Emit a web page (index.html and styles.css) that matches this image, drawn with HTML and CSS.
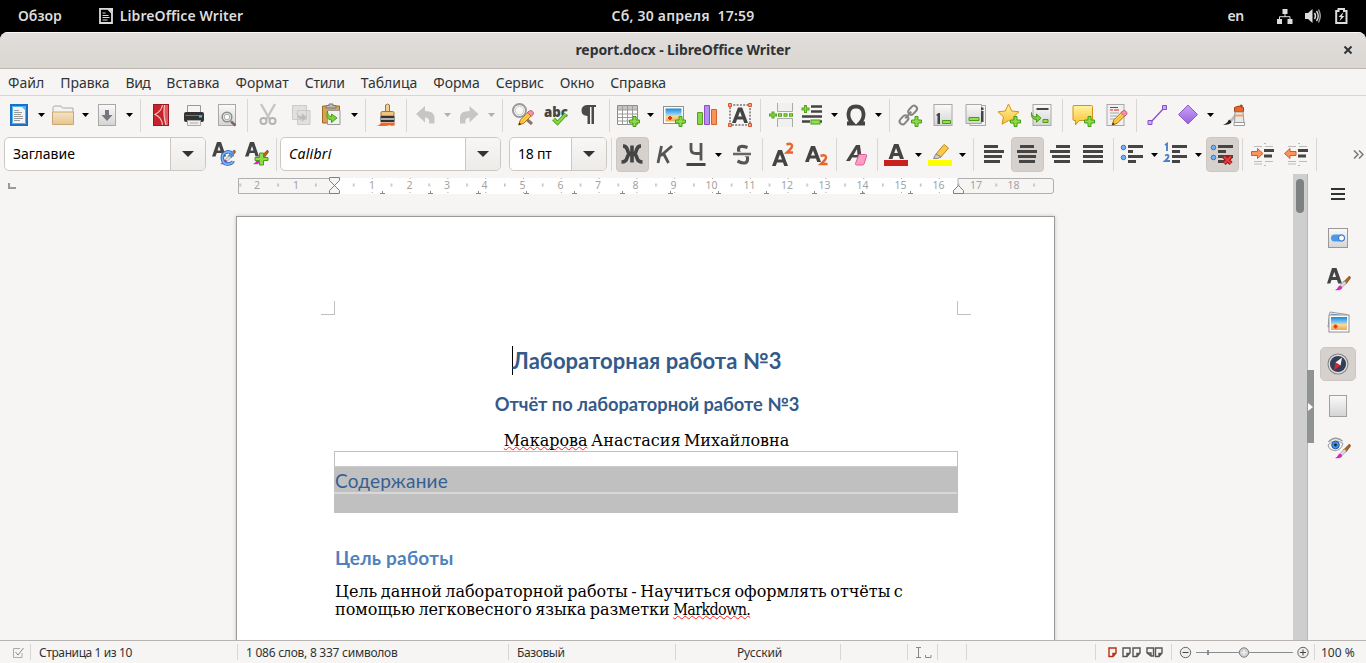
FILE: index.html
```html
<!DOCTYPE html>
<html lang="ru">
<head>
<meta charset="utf-8">
<title>report.docx - LibreOffice Writer</title>
<link rel="stylesheet" href="styles.css">
</head>
<body>
<svg class="defs" width="0" height="0">
<defs>
<linearGradient id="gGrey" x1="0" y1="0" x2="0" y2="1"><stop offset="0" stop-color="#fafafa"/><stop offset="1" stop-color="#d4d4d4"/></linearGradient>
<linearGradient id="gSky" x1="0" y1="0" x2="0" y2="1"><stop offset="0" stop-color="#1888d8"/><stop offset=".55" stop-color="#a8e0fa"/><stop offset=".56" stop-color="#fbdc98"/><stop offset="1" stop-color="#f0a850"/></linearGradient>
<linearGradient id="gFold" x1="0" y1="0" x2="0" y2="1"><stop offset="0" stop-color="#f7e3c4"/><stop offset="1" stop-color="#e6c58f"/></linearGradient>
<linearGradient id="gYel" x1="0" y1="0" x2="0" y2="1"><stop offset="0" stop-color="#fff3a0"/><stop offset="1" stop-color="#fbc02d"/></linearGradient>
<linearGradient id="gPur" x1="0" y1="0" x2="0" y2="1"><stop offset="0" stop-color="#c9a2f5"/><stop offset="1" stop-color="#9a62dc"/></linearGradient>
<g id="plus"><path d="M4 .5h3v3.500h3.500v3H7v3.500H4V7H.5V4H4z" fill="#8bdc45" stroke="#4a9c16"/></g>
<g id="pencil"><path d="M1 13l1.500-4.500L10 1l3 3-7.500 7.500z" fill="#f8c030" stroke="#a86a10" stroke-width=".8"/><path d="M9 2l1.800-1.800q1.500-.6 2.700.6t.6 2.700L12.300 5.200z" fill="#f890a8" stroke="#b84060" stroke-width=".7"/><path d="M1 13l.7-2.200L3.300 12.300z" fill="#222"/><path d="M3.500 8.800l6-6M5 10.400l6-6" stroke="#ffe27a" stroke-width=".7"/></g>
<g id="brush"><path d="M7.500 6l6-6 1 2-4.500 6z" fill="#b86414" stroke="#5c3208" stroke-width=".6"/><path d="M4 9.500L8.500 5l2 2L6 11.500z" fill="#ddd" stroke="#777" stroke-width=".6"/><path d="M-1 14q2.500-1 3.500-3.500 1.500-1.500 3 0t0 2.500q-2 2-6.500 1z" fill="#d428c0"/></g>
<g id="photo"><rect x=".5" y=".5" width="20" height="17" fill="#fff" stroke="#909090"/><rect x="2.500" y="2.500" width="16" height="13" fill="url(#gSky)"/><path d="M7 10v4M5 12h4" stroke="#e03a10" stroke-width="2"/></g>
<g id="caret"><path d="M4 10h7l-3.500 4z"/></g>
</defs>
</svg>

<header class="topbar">
  <div class="top-left"><span>Обзор</span>
    <span class="top-app"><svg width="14" height="16" viewBox="0 0 14 16"><path d="M1 .9h8L13 5v10H1z" fill="none" stroke="#ddd" stroke-width="1.800"/><path d="M9 0h5v5z" fill="#ddd"/><path d="M3.500 5h3M3.500 7.500h6M3.500 9.500h7M3.500 12h5" stroke="#ddd" stroke-width="1.200"/></svg><span class="w-app">LibreOffice Writer</span></span></div>
  <div class="top-date"><span class="w-date">Сб, 30 апреля&nbsp; 17:59</span></div>
  <div class="top-right"><span class="w-en">en</span>
    <svg class="i-net" width="16" height="16" viewBox="0 0 16 16"><path d="M5.500 1h5v5h-5zM0 11h5v5H0zM10.500 11h5v5h-5z" fill="#ddd"/><path d="M8 5v4M2.500 11V8.700h10.500V11" fill="none" stroke="#ddd"/></svg>
    <svg class="i-vol" width="16" height="16" viewBox="0 0 16 16"><path d="M0 5h3l4.500-4v14L3 11H0z" fill="#ddd"/><path d="M9.500 5q2 3 0 6M11.500 3q3.500 5 0 10" fill="none" stroke="#ddd" stroke-width="1.400"/><path d="M13.500 1.500q3.500 6.500 0 13" fill="none" stroke="#aaa" stroke-width="1.300"/></svg>
    <svg class="i-bat" width="13" height="16" viewBox="0 0 13 16"><path d="M1.200 3h2.300V1h5.500v2h2.500v12H1.200z" fill="none" stroke="#ddd" stroke-width="2"/><path d="M8.500 4L3.500 9h2.500L4.500 13 9.500 8H7z" fill="#ddd"/></svg></div>
</header>

<div class="window">
<div class="titlebar"><span class="w-title">report.docx - LibreOffice Writer</span><svg class="close" width="10" height="10" viewBox="0 0 10 10"><path d="M1.500 1.500l7 7M8.500 1.500l-7 7" stroke="#2e3436" stroke-width="2"/></svg></div>
<nav class="menubar"><span>Файл</span><span>Правка</span><span class="m3">Вид</span><span>Вставка</span><span>Формат</span><span class="m6">Стили</span><span>Таблица</span><span class="m8">Форма</span><span class="m9">Сервис</span><span class="m10">Окно</span><span class="m11">Справка</span></nav>

<div class="toolbar standard">
  <div class="group">
    <div class="dd"><svg viewBox="0 0 24 24"><rect x="4" y="2" width="16" height="20" fill="#f4f4f4" stroke="#1b6fc4" stroke-width="2"/><path d="M5.500 20.500v-17h13v17z" fill="none" stroke="#4fb4f4"/><path d="M14 3h5v5z" fill="#4fb4f4"/><path d="M7 7.500h5M7 9.500h8M7 11.500h7M7 13.500h9M7 15.500h9M7 17.500h6" stroke="#9a9a9a"/></svg><svg class="caret"><use href="#caret"/></svg></div>
    <div class="dd"><svg viewBox="0 0 24 24"><path d="M2 21V4.500L3 3h7l1.500 2H22v16z" fill="#f4f4f4" stroke="#aaa"/><path d="M1.500 9h21v12.500h-21z" fill="url(#gFold)" stroke="#c8a870"/></svg><svg class="caret"><use href="#caret"/></svg></div>
    <div class="dd"><svg viewBox="0 0 24 24"><rect x="3.500" y="1.500" width="17" height="21" fill="url(#gGrey)" stroke="#a8a8a8"/><path d="M10 7h4v5h3.500L12 18l-5.500-6H10z" fill="#74787c"/></svg><svg class="caret"><use href="#caret"/></svg></div>
  </div>
  <div class="group">
    <div class="btn"><svg viewBox="0 0 24 24"><rect x="4.500" y="1.500" width="15" height="21" fill="#c8232b" stroke="#9c1820"/><path d="M15 2q-1.500 10 1.500 20h2.500V2z" fill="#e05a60"/><path d="M13.500 2Q12.500 8 6 11.500q7 3 7.500 10.500M15.500 2q-1.500 10 1.500 20" fill="none" stroke="#f3c5c5" stroke-width="1.200"/></svg></div>
    <div class="btn"><svg viewBox="0 0 24 24"><path d="M5.500 2.500h13V10h-13z" fill="#f4f4f4" stroke="#999"/><rect x="2" y="9" width="20" height="10" rx="2" fill="#333"/><path d="M3.500 12.500h17" stroke="#777"/><rect x="17" y="12.500" width="3" height="2" fill="#3cc8f4"/><path d="M5.500 17.500h13v5h-13z" fill="#eee" stroke="#aaa"/><path d="M8 20h8" stroke="#aaa"/></svg></div>
    <div class="btn"><svg viewBox="0 0 24 24"><rect x="3.500" y="1.500" width="17" height="21" fill="url(#gGrey)" stroke="#a8a8a8"/><circle cx="12" cy="14" r="4.800" fill="#e8eaec" stroke="#8c8c8c" stroke-width="1.500"/><circle cx="12" cy="14" r="2.800" fill="#fff" stroke="#aaa"/><path d="M16 18.500l4.500 4" stroke="#7c6460" stroke-width="2.500"/></svg></div>
  </div>
  <div class="group">
    <div class="btn"><svg viewBox="0 0 24 24" fill="none" stroke="#b4b4b4"><path d="M5 1l8.500 15M19 1l-8.500 15" stroke="#c4c4c4" stroke-width="2.400"/><circle cx="7.500" cy="18" r="3" stroke-width="2"/><circle cx="16.500" cy="18" r="3" stroke-width="2"/></svg></div>
    <div class="btn"><svg viewBox="0 0 24 24" fill="#e0e0e0" stroke="#cacaca"><path d="M3.500 2.500h14v14h-14zM8.500 7.500h12.500v14h-12.500z"/><path d="M8 10q1 4 5 3v-2.500l5 4-5 4V16q-5 1-5-6z" fill="#bbb"/></svg></div>
    <div class="dd"><svg viewBox="0 0 24 24"><path d="M2.500 3h17v17h-17z" fill="#d8a254" stroke="#9c6c24"/><path d="M6 5V2.500h3V1h4v1.500h3V5z" fill="#bbb" stroke="#777"/><path d="M7.500 7.500h12.500v14H7.500z" fill="#f2f2f2" stroke="#999"/><path d="M7.500 8q0 5.500 4 5.500V11l5.500 4-5.500 4.500V17Q5 16.500 7.500 8z" fill="#7cd33c" stroke="#4a9c16"/></svg><svg class="caret"><use href="#caret"/></svg></div>
  </div>
  <div class="group">
    <div class="btn"><svg viewBox="-1 0 24 24"><path d="M10.500 9V2q2-2 4 0v7z" fill="#efce98" stroke="#a8742c"/><path d="M6 13V9.500Q6 8.500 7.500 8.500h10q1.500 0 1.500 1V13z" fill="#efc47c" stroke="#a8742c"/><path d="M5.500 13h14v6h-14z" fill="#333"/><path d="M6 16h13" stroke="#ddd" stroke-width="1.500"/><path d="M.5 23q4 0 5.500-3.500h14l-.5 3-4 .5.500-1-5 1z" fill="#e96b2c"/></svg></div>
  </div>
  <div class="group">
    <div class="dd off"><svg viewBox="0 0 24 24"><path d="M3 11l9-8v5q9 0 9.500 6v6.500h-5.500q1-6-4-6v5z" fill="#c6c6c6"/></svg><svg class="caret"><use href="#caret"/></svg></div>
    <div class="dd off"><svg viewBox="0 0 24 24"><path d="M21.500 11l-9-8v5Q3 8 3 14v6.500h5.500q-1-6 4-6v5z" fill="#c6c6c6"/></svg><svg class="caret"><use href="#caret"/></svg></div>
  </div>
  <div class="group">
    <div class="btn"><svg viewBox="0 0 24 24"><circle cx="8.500" cy="7.500" r="6.500" fill="#f8f8f8" stroke="#999" stroke-width="2"/><circle cx="8.500" cy="7.500" r="4.200" fill="none" stroke="#ccc"/><path d="M13 14l8 7" stroke="#8c7470" stroke-width="3"/><use href="#pencil" transform="translate(6.500 7.500) scale(1.120)"/></svg></div>
    <div class="btn"><svg viewBox="0 0 24 24"><text x="0" y="13.500" font-family="Noto Sans" font-weight="900" font-size="14.500" textLength="24" lengthAdjust="spacingAndGlyphs" fill="#444">abc</text><path d="M9.500 16l4 4 8.500-9" fill="none" stroke="#54a41c" stroke-width="4"/><path d="M9.500 16l4 4 8.500-9" fill="none" stroke="#86d648" stroke-width="2"/></svg></div>
    <div class="btn"><svg viewBox="0 0 24 24"><path d="M10 2h9v2h-2v17h-2.500V4H13v17h-2.500v-8q-6-.5-6-5.500T10 2z" fill="#4a4a4a"/></svg></div>
  </div>
  <div class="group">
    <div class="dd"><svg viewBox="0 0 24 24"><path d="M1.500 2.500h20v19h-20z" fill="#fff" stroke="#8c8c8c"/><path d="M2 3h19v4H2z" fill="#c4c4c4"/><path d="M1.500 7h20M1.500 11h20M1.500 14.500h20M1.500 18h20M6.500 2v20M11.500 2v20M16.500 2v20" stroke="#9a9a9a"/><use href="#plus" x="13" y="13"/></svg><svg class="caret"><use href="#caret"/></svg></div>
    <div class="btn"><svg viewBox="0 0 24 24"><use href="#photo" x="1" y="3"/><use href="#plus" x="13" y="13"/></svg></div>
    <div class="btn"><svg viewBox="0 0 24 24"><path d="M2.500 9.500h5v12h-5z" fill="#86d648" stroke="#5a9c24"/><path d="M9.500 2.500h5v19h-5z" fill="#b98cf0" stroke="#8450c4"/><path d="M16.500 6.500h5v15h-5z" fill="#f8935a" stroke="#d4602c"/></svg></div>
    <div class="btn"><svg viewBox="0 0 24 24"><path d="M2 2h20v20H2z" fill="none" stroke="#333" stroke-dasharray="2 1.300"/><path d="M10 4.500h4.200L20 20h-3.800l-1.200-3.500H9L7.800 20H4zM12 8.500l-1.800 5h3.600z" fill="#444" fill-rule="evenodd"/><path d="M.5.5h3v3h-3zM20.500.5h3v3h-3zM.5 20.500h3v3h-3zM20.500 20.500h3v3h-3z" fill="#f9a080" stroke="#d8552c"/></svg></div>
  </div>
  <div class="group">
    <div class="btn"><svg viewBox="0 0 24 24"><path d="M8.500 0v8.500h15V0M8.500 24v-8.500h15V24" fill="#f0f0f0" stroke="#aaa"/><path d="M4 8.500v7M0 12h8" stroke="#54a41c" stroke-width="3"/><path d="M4 9.500v5M1 12h6" stroke="#8bdc45" stroke-width="1"/><path d="M9 12h4M14.500 12h4M20 12h4" stroke="#54a41c" stroke-width="3.500"/><path d="M10 12h2M15.500 12h2M21 12h2" stroke="#94e04c" stroke-width="1.500"/></svg></div>
    <div class="dd"><svg viewBox="0 0 24 24"><path d="M11 3.500h11M11 8.500h11M2 13.500h20M2 18.500h8M20 18.500h2" stroke="#444" stroke-width="2.600"/><path d="M5.500 2v8M1.500 6h8" stroke="#54a41c" stroke-width="3"/><path d="M5.500 3v6M2.500 6h6" stroke="#8bdc45"/><rect x="11" y="17" width="9" height="4" fill="#94e04c" stroke="#4a9c16"/></svg><svg class="caret"><use href="#caret"/></svg></div>
    <div class="dd"><svg viewBox="0 0 24 24"><path d="M3 20.500h5.500Q4 16 4.500 10.500 5 3.500 12 3.500t7.500 7Q20 16 15.500 20.500H21" fill="none" stroke="#444" stroke-width="3.800"/></svg><svg class="caret"><use href="#caret"/></svg></div>
  </div>
  <div class="group">
    <div class="btn"><svg viewBox="0 0 24 24"><g transform="rotate(-48 11 12)" fill="none" stroke="#858585" stroke-width="2"><rect x="-1" y="8.500" width="10" height="6" rx="3"/><rect x="12" y="8.500" width="10" height="6" rx="3"/><path d="M6 11.500h9"/></g><use href="#plus" x="13" y="13"/></svg></div>
    <div class="btn"><svg viewBox="0 0 24 24"><rect x="3" y="1.500" width="18" height="21" fill="url(#gGrey)" stroke="#a8a8a8"/><path d="M5 12l2.500-2H9v11H6.500v-8z" fill="#444"/><path d="M11.500 17.500h8v3h-8z" fill="#94e04c" stroke="#4a9c16"/></svg></div>
    <div class="btn"><svg viewBox="0 0 24 24"><path d="M6 2.500h15.500v20H6z" fill="#f4f4f4" stroke="#a8a8a8"/><path d="M2 1.500h15.500v19H2z" fill="url(#gGrey)" stroke="#a8a8a8"/><path d="M17 8h2.500v11H17zM17 4.500h2.500V7H17z" fill="#444"/><path d="M5 14.500h10v3H5z" fill="#94e04c" stroke="#4a9c16"/></svg></div>
    <div class="btn"><svg viewBox="0 0 24 24"><path d="M11.500 1l3.200 7 7.300.8-5.500 5 1.500 7.400-6.500-3.700L5 21.200l1.500-7.400L1 8.800 8.300 8z" fill="url(#gYel)" stroke="#d89018"/><use href="#plus" x="13" y="13"/></svg></div>
    <div class="btn"><svg viewBox="0 0 24 24"><rect x="3" y="1.500" width="18" height="21" fill="url(#gGrey)" stroke="#a8a8a8"/><path d="M6.500 6h12" stroke="#444" stroke-width="2"/><path d="M1.500 9.500q0 4.500 5 4.500v-3l4.500 4.200-4.500 4V16.500q-6 0-5-7z" fill="#7cd33c" stroke="#4a9c16"/><path d="M13 16.500h5v3h-5z" fill="#94e04c" stroke="#4a9c16"/></svg></div>
  </div>
  <div class="group">
    <div class="btn"><svg viewBox="0 0 24 24"><path d="M3 2.500h17.500q1 0 1 1v13q0 1-1 1H8L4.500 22v-4.500H3q-1 0-1-1v-13q0-1 1-1z" fill="url(#gYel)" stroke="#d89018"/><use href="#plus" x="13" y="13"/></svg></div>
    <div class="btn"><svg viewBox="0 0 24 24"><rect x="3" y="1.500" width="17" height="21" fill="#f0f0f0" stroke="#a8a8a8"/><path d="M6 4.500h8M6 7h3M10 7h5" stroke="#d42020"/><path d="M6 10h9M6 13h7M6 16h5" stroke="#a8a8a8"/><use href="#pencil" transform="translate(7 7.500) scale(1.120)"/></svg></div>
  </div>
  <div class="group">
    <div class="btn"><svg viewBox="0 0 24 24"><path d="M5 20L20 4" stroke="#8450c4" stroke-width="1.300"/><path d="M3 17.500h4v4H3zM17.500 2.500h4v4h-4z" fill="#cda8f8" stroke="#8450c4"/></svg></div>
    <div class="dd"><svg viewBox="0 0 24 24"><path d="M12 2l9.500 9.500L12 21 2.500 11.500z" fill="url(#gPur)" stroke="#8f5cd0"/></svg><svg class="caret"><use href="#caret"/></svg></div>
    <div class="btn"><svg viewBox="0 0 24 24"><path d="M13 13L20 2" stroke="#8c4c1c" stroke-width="2.500"/><path d="M7 18l6-7 2 1.500L9 20z" fill="#bbb"/><path d="M1 21.500q4-.5 6-5 3 1.500 2 3.500-3 2.500-8 1.500z" fill="#222"/><path d="M12.500 4.500q4.500-3 9 0v4h-9z" fill="#e8662c" stroke="#a84010"/><path d="M13 9h8l1 11h-9.500z" fill="#e8e8e8" stroke="#999"/><path d="M13 11.500h8.500v2H13z" fill="#f8a060"/><path d="M12 19.500h10.500v3H12z" fill="#fff" stroke="#999"/></svg></div>
  </div>
</div>

<div class="toolbar formatting">
  <div class="combo style"><span>Заглавие</span><b><svg width="12" height="6"><path d="M0 0h12L6 6z" fill="#2e3436"/></svg></b></div>
  <div class="btn"><svg viewBox="0 0 24 24"><path d="M5 0h4l5 14.500h-3.500L9.500 11H4.800L3.500 14.500H0zM7 4L5.500 8.500h3z" fill="#444" fill-rule="evenodd"/><use href="#brush" x="9" y="8"/><path d="M20.500 12q-3-3.500-7-1.500t-3 7 5.500 4.500 5-3" fill="none" stroke="#2a64b4" stroke-width="3.500"/><path d="M20.500 12q-3-3.500-7-1.500t-3 7 5.500 4.500 5-3" fill="none" stroke="#78b0f0" stroke-width="1.800"/><path d="M22 7.500v7h-6.500z" fill="#5090e0"/></svg></div>
  <div class="btn"><svg viewBox="0 0 24 24"><path d="M5 0h4l5 14.500h-3.500L9.500 11H4.800L3.500 14.500H0zM7 4L5.500 8.500h3z" fill="#444" fill-rule="evenodd"/><use href="#brush" x="9" y="8"/><path d="M14.500 11h4v4.500h4.500v3h-4.500V23h-4v-4.500H10v-3h4.500z" fill="#8bdc45" stroke="#4a9c16"/></svg></div>
  <div class="vline"></div>
  <div class="combo font"><i class="w-font">Calibri</i><b><svg width="12" height="6"><path d="M0 0h12L6 6z" fill="#2e3436"/></svg></b></div>
  <div class="combo size"><span class="w-size">18 пт</span><b><svg width="12" height="6"><path d="M0 0h12L6 6z" fill="#2e3436"/></svg></b></div>
  <div class="group">
    <div class="btn on"><svg viewBox="0 0 24 24" fill="none" stroke="#444" stroke-width="3.600"><path d="M12 3.500v17M3 4q3.500 0 4.500 4t3 4Q8 12 7 16t-5.500 4M21 4q-3.500 0-4.500 4t-3 4q2.500 0 3.500 4t5.500 4"/></svg></div>
    <div class="btn"><svg viewBox="0 0 24 24" fill="none" stroke="#555" stroke-width="2.800"><path d="M8.500 4L5 21M19 4l-10.500 9h-1M10.500 11.500l5 9.500"/></svg></div>
    <div class="dd"><svg viewBox="0 0 24 24" fill="none" stroke="#555" stroke-width="2.800"><path d="M7 1v6q0 4.500 5 4.500h5M17 1v17.500"/><path d="M2.500 22.500h19" stroke="#444" stroke-width="3"/></svg><svg class="caret"><use href="#caret" y="1"/></svg></div>
    <div class="btn"><svg viewBox="0 0 24 24" fill="none" stroke="#555" stroke-width="3.200"><path d="M17.500 5.500q-9-3-9 2t5 5 4 5.500-10 1"/><path d="M3 12h18" stroke="#f6f5f4" stroke-width="4.500"/><path d="M3 12h18" stroke="#666" stroke-width="2.600"/></svg></div>
  </div>
  <div class="group">
    <div class="btn"><svg viewBox="0 0 24 24"><path d="M7 8h4l6 16h-3.800L12 20.500H6L4.800 24H1zM9 12.500L7 17.500h4z" fill="#444" fill-rule="evenodd"/><path d="M15.500 2.500q5.500-2 5.500 1.500 0 2-5 6.500h6" fill="none" stroke="#e8662c" stroke-width="2.500"/></svg></div>
    <div class="btn"><svg viewBox="0 0 24 24"><path d="M7 4h4l6 16h-3.800L12 16.500H6L4.800 20H1zM9 8.500L7 13.500h4z" fill="#444" fill-rule="evenodd"/><path d="M16.500 14q5.500-2 5.500 1.500 0 2-5 6.500h6.500" fill="none" stroke="#e8662c" stroke-width="2.500"/></svg></div>
  </div>
  <div class="group">
    <div class="btn"><svg viewBox="0 0 24 24"><path d="M11 3h4l2 16h-3.800L13 15.500H7L5 19H1zM12 7l-3.500 6h4z" fill="#444" fill-rule="evenodd"/><path d="M14.500 12.500h6q1.500 0 1 1.500l-2.500 8q-.5 1-1.500 1h-6q-1.500 0-1-1.500l3-8q.2-1 1-1z" fill="#fba0c4" stroke="#e0589c"/></svg></div>
  </div>
  <div class="group">
    <div class="dd"><svg viewBox="0 0 24 24"><path d="M10 2h4.500L20 17h-4l-1.200-3H9.500L8.500 17H4.500zM12 6l-1.700 5h3.600z" fill="#444" fill-rule="evenodd"/><path d="M0 18h24v6H0z" fill="#c9211e"/></svg><svg class="caret"><use href="#caret" y="1"/></svg></div>
    <div class="dd"><svg viewBox="0 0 24 24"><path d="M8 12L16 2.500l4.500 3.500L13 15z" fill="#f8c84c" stroke="#c08820"/><path d="M8 12l5 3-3.500 1.500h-4z" fill="#ccc" stroke="#888"/><path d="M0 18h24v6H0z" fill="#ff0"/></svg><svg class="caret"><use href="#caret" y="1"/></svg></div>
  </div>
  <div class="group">
    <div class="btn"><svg viewBox="0 0 24 24"><path d="M2 4.500h14M2 9.500h20M2 14.500h18M2 19.500h16" stroke="#454545" stroke-width="2.800"/></svg></div>
    <div class="btn on"><svg viewBox="0 0 24 24"><path d="M5 4.500h14M2 9.500h20M3 14.500h18M4 19.500h16" stroke="#454545" stroke-width="2.800"/></svg></div>
    <div class="btn"><svg viewBox="0 0 24 24"><path d="M8 4.500h14M2 9.500h20M4 14.500h18M6 19.500h16" stroke="#454545" stroke-width="2.800"/></svg></div>
    <div class="btn"><svg viewBox="0 0 24 24"><path d="M2 4.500h20M2 9.500h20M2 14.500h20M2 19.500h20" stroke="#454545" stroke-width="2.800"/></svg></div>
  </div>
  <div class="group">
    <div class="dd"><svg viewBox="0 0 24 24"><path d="M8 4.500h15M8 9.500h5M8 14.500h15M8 19.500h8" stroke="#454545" stroke-width="2.800"/><circle cx="3.500" cy="5.500" r="2.300" fill="#6fb0f4" stroke="#3478c8"/><circle cx="3.500" cy="15.500" r="2.300" fill="#6fb0f4" stroke="#3478c8"/></svg><svg class="caret"><use href="#caret" y="1"/></svg></div>
    <div class="dd"><svg viewBox="0 0 24 24"><path d="M8 4.500h15M8 9.500h8M8 14.500h15M8 19.500h8" stroke="#454545" stroke-width="2.800"/><path d="M1 3l2-1.200V9M1 13.500q3.500-1.500 3.500.8 0 1.500-3.500 4.700h5" fill="none" stroke="#4a80cc" stroke-width="1.900"/></svg><svg class="caret"><use href="#caret" y="1"/></svg></div>
    <div class="btn on"><svg viewBox="0 0 24 24"><path d="M8 4.500h15M8 9.500h8M8 14.500h15M8 19.500h8" stroke="#454545" stroke-width="2.800"/><circle cx="3.500" cy="5.500" r="2.300" fill="#6fb0f4" stroke="#3478c8"/><circle cx="3.500" cy="15.500" r="2.300" fill="#6fb0f4" stroke="#3478c8"/><path d="M14 14.500l7 7M21 14.500l-7 7" stroke="#a81414" stroke-width="4.500"/><path d="M14 14.500l7 7M21 14.500l-7 7" stroke="#e04040" stroke-width="2"/></svg></div>
  </div>
  <div class="group">
    <div class="btn"><svg viewBox="0 0 24 24"><path d="M3 4.500h8M3 19.500h8M3 22h8M14 4.500h8M14 19.500h8M13 1.500h2M13 23.500h2" stroke="#bbb"/><path d="M13 8.500h10M13 14h8" stroke="#454545" stroke-width="2.800"/><path d="M.5 9.500h6V6.500l5.500 5-5.500 5v-3h-6z" fill="#f8945c" stroke="#d8582c"/></svg></div>
    <div class="btn"><svg viewBox="0 0 24 24"><path d="M4 4.500h8M4 19.500h8M4 22h8M15 4.500h8M15 19.500h8M14 1.500h2M14 23.500h2" stroke="#bbb"/><path d="M14 8.500h10M14 14h8" stroke="#454545" stroke-width="2.800"/><path d="M12 9.500H6V6.500l-5.500 5 5.500 5v-3h6z" fill="#f8945c" stroke="#d8582c"/></svg></div>
  </div>
  <div class="group last"></div>
  <svg class="more" width="11" height="9" viewBox="0 0 11 9"><path d="M1 .5l4 4-4 4M6 .5l4 4-4 4" fill="none" stroke="#777" stroke-width="1.500"/></svg>
</div>

<div class="work">
  <main class="editor">
    <div class="rulerbar">
      <svg class="tabsel" width="8" height="8"><path d="M1 0v5h7" fill="none" stroke="#999" stroke-width="2"/></svg>
      <svg class="ruler" width="817" height="22" viewBox="0 0 817 22">
        <defs>
          <pattern id="half" x="77" y="0" width="37.800" height="22" patternUnits="userSpaceOnUse"><path d="M.9 9.500v3" stroke="#999"/></pattern>
          <pattern id="dots" x="96" y="0" width="37.800" height="22" patternUnits="userSpaceOnUse"><path d="M0 4.500h1M0 18.500h1" stroke="#aaa"/></pattern>
          <pattern id="tabs" x="142" y="0" width="48" height="22" patternUnits="userSpaceOnUse"><path d="M0 19.500h5M2.500 17v3" stroke="#8a8a8a"/></pattern>
        </defs>
        <rect x="96" y="4" width="624" height="16" fill="#fff"/>
        <path d="M96 4.500H.5v15H96M720 4.500h93q2.500 0 2.500 2.500v10q0 2.500-2.500 2.500h-93z" fill="none" stroke="#b0b0b0"/>
        <rect x="0" y="0" width="815" height="22" fill="url(#half)"/>
        <rect x="130" y="0" width="588" height="22" fill="url(#dots)"/>
        <rect x="142" y="0" width="545" height="22" fill="url(#tabs)"/>
        <path d="M91.500 3.500v3l10 10v3h-10v-3l10-10v-3z" fill="#f6f5f4" stroke="#808080"/><path d="M715.500 19.500v-3l5-5 5 5v3z" fill="#f6f5f4" stroke="#808080"/>
        <g class="ruler-nums"><text x="19" y="14.500">2</text><text x="58" y="14.500">1</text><text x="134" y="14.500">1</text><text x="171.500" y="14.500">2</text><text x="209" y="14.500">3</text><text x="246.500" y="14.500">4</text><text x="284.500" y="14.500">5</text><text x="322.500" y="14.500">6</text><text x="360" y="14.500">7</text><text x="397.500" y="14.500">8</text><text x="435.500" y="14.500">9</text><text x="473.500" y="14.500">10</text><text x="511.500" y="14.500">11</text><text x="549" y="14.500">12</text><text x="586.500" y="14.500">13</text><text x="624.500" y="14.500">14</text><text x="662.500" y="14.500">15</text><text x="700.500" y="14.500">16</text><text x="738" y="14.500">17</text><text x="775.500" y="14.500">18</text></g>
      </svg>
    </div>
    <article class="page">
      <div class="marks"><i class="mark-l"></i><i class="mark-r"></i></div>
      <h1><span class="cursor"></span>Лабораторная работа №3</h1>
      <h2>Отчёт по лабораторной работе №3</h2>
      <p class="author"><span class="wavy">Макарова</span> Анастасия Михайловна</p>
      <section class="toc"><div class="toc-title">Содержание</div><div class="toc-line"></div></section>
      <h3>Цель работы</h3>
      <p class="body">Цель данной лабораторной работы - Научиться оформлять отчёты с<br>помощью легковесного языка разметки <span class="latin wavy">Markdown.</span></p>
    </article>
  </main>
  <div class="scrollbar"><div class="thumb"></div></div>
  <div class="splitter"><div class="handle"><svg width="5" height="8"><path d="M0 0l5 4-5 4z" fill="#fff"/></svg></div></div>
  <aside class="sidebar">
    <div class="side menu"><svg viewBox="0 0 24 24"><path d="M5 7h14M5 12h14M5 17h14" stroke="#2e3436" stroke-width="2"/></svg></div>
    <div class="side"><svg viewBox="0 0 24 24"><rect x="2.500" y="2.500" width="19" height="19" fill="url(#gGrey)" stroke="#989898"/><rect x="5" y="8.500" width="14" height="7" rx="3.500" fill="#4a98ec"/><circle cx="15.500" cy="12" r="3" fill="#fff" stroke="#3070b8"/></svg></div>
    <div class="side"><svg viewBox="0 0 24 24"><path d="M6 0h4.500L16 15.500h-3.800L11 12H5.500l-1.200 3.500H1zM8.300 4L6.500 9h3.500z" fill="#444" fill-rule="evenodd"/><use href="#brush" x="10" y="8"/></svg></div>
    <div class="side"><svg viewBox="0 0 24 24"><path d="M4 2l17 2.500-2 15-17-2.500z" fill="#fff" stroke="#999"/><path d="M5.500 3.500l14 2-2 5-13-2z" fill="#3c9cdc"/><use href="#photo" x="2.500" y="4.500"/></svg></div>
    <div class="side on"><svg viewBox="0 0 24 24"><circle cx="12" cy="12" r="9.500" fill="#343e58" stroke="#808080" stroke-width="2"/><circle cx="12" cy="12" r="8.800" fill="none" stroke="#ddd" stroke-width="1.400"/><path d="M16 5.500l-1.500 8-5-3z" fill="#f4f4f4"/><path d="M8 18.500l1.500-8 5 3z" fill="#d82828"/></svg></div>
    <div class="side"><svg viewBox="0 0 24 24"><rect x="3.500" y="1.500" width="17" height="21" fill="url(#gGrey)" stroke="#a0a0a0"/></svg></div>
    <div class="side"><svg viewBox="0 0 24 24"><path d="M2 9Q9 1.500 17 7.500q-2 7-8 7T2 9z" fill="#f4f4f4" stroke="#999"/><path d="M2.500 6Q9-1 16.500 5" fill="none" stroke="#999" stroke-width="1.500"/><circle cx="9.500" cy="9" r="3.800" fill="#4a90e8" stroke="#2458a8"/><circle cx="9.500" cy="9" r="1.400" fill="#123"/><use href="#brush" x="10" y="8"/></svg></div>
  </aside>
</div>

<footer class="status">
  <div class="st s1"><svg width="11" height="11" viewBox="0 0 11 11"><path d="M9 6v4.500H.5v-9H7" fill="none" stroke="#aaa"/><path d="M2.500 5l2.500 3L10.500 1" fill="none" stroke="#888"/></svg></div>
  <div class="st s2">Страница 1 из 10</div>
  <div class="st s3">1 086 слов, 8 337 символов</div>
  <div class="st s4">Базовый</div>
  <div class="st s5">Русский</div>
  <div class="st s6"></div>
  <div class="st s7"><svg width="16" height="11" viewBox="0 0 16 11"><path d="M0 .5h5M0 10.500h5M2.500 0v11M9.500 8v2.500h5.500V8" fill="none" stroke="#888"/></svg></div>
  <div class="st s8"></div>
  <div class="st s9"></div>
  <div class="st s10"><svg width="56" height="11" viewBox="0 0 56 11" fill="none" stroke="#555" stroke-width="1.400"><path d="M2 1h7v5L6 9.500H2zM6 9.500V6.500h3" stroke="#b83010"/><path d="M16 1h7v5l-3 3.500h-4zM20 9.500V6.500h3M26 1h7v5l-3 3.500h-4zM30 9.500V6.500h3M40 1h6.500v8H44L40 6zM40 6h4v3.500M48.500 1H55v5l-3 3.500h-3.500zM52 9.500V6.500h3"/></svg></div>
  <div class="st s11"><svg width="130" height="13" viewBox="0 0 130 13"><circle cx="6.500" cy="6.500" r="5.200" fill="#eee" stroke="#666"/><path d="M3.500 6.500h6" stroke="#444"/><path d="M17 6.500h97" stroke="#8a8e8e"/><path d="M29 4v5" stroke="#8a8e8e" stroke-width="2"/><circle cx="65" cy="6.500" r="4.700" fill="#ccc" stroke="#808080"/><path d="M65 3.500v6M62 6.500h6" stroke="#eee" stroke-width="1.500"/><circle cx="124" cy="6.500" r="5.200" fill="#eee" stroke="#666"/><path d="M121 6.500h6M124 3.500v6" stroke="#444"/></svg></div>
  <div class="st s12">100 %</div>
</footer>
</div>
</body>
</html>
```
FILE: styles.css
```css
* { box-sizing: border-box; }
body { margin: 0; width: 1366px; height: 663px; overflow: hidden; background: #000; font-family: "Noto Sans", "Open Sans", sans-serif; font-size: 14px; color: #2e3436; display: flex; flex-direction: column; }
.defs { position: absolute; }
span, i, h1, h2, p { white-space: nowrap; }
.topbar { height: 32px; padding-bottom: 1px; display: grid; grid-template-columns: 1fr auto 1fr; align-items: center; color: #ddd; font-weight: 600; }
.top-left { display: flex; align-items: center; padding-left: 18px; gap: 37px; }
.top-app { display: flex; align-items: center; gap: 7px; }
.top-right { display: flex; align-items: center; justify-content: flex-end; padding-right: 18px; }
.w-app { letter-spacing: 0.096px; }
.w-date { letter-spacing: 0.221px; }
.w-en { letter-spacing: -0.3px; }
.i-net { margin-left: 33px; }
.i-vol { margin-left: 12px; }
.i-bat { margin-left: 14px; }
.window { flex: 1; display: flex; flex-direction: column; background: #f6f5f4; border-radius: 8px 8px 0 0; overflow: hidden; }
.titlebar { height: 37px; padding-bottom: 2px; display: flex; align-items: center; justify-content: center; position: relative; font-weight: 700; background: linear-gradient(#e1dedb, #dad6d2); border-top: 1px solid #f8f7f6; border-bottom: 1px solid #bfb8b1; }
.w-title { letter-spacing: -0.091px; }
.close { position: absolute; right: 13px; top: 12px; }
.menubar { height: 27px; border-bottom: 1px solid #d9d7d5; display: flex; align-items: center; gap: 16px; padding-left: 8px; }
.m3 { letter-spacing: -0.5px; }
.m6 { letter-spacing: -0.216px; }
.m8 { letter-spacing: -0.063px; }
.m9 { letter-spacing: -0.115px; }
.m10 { letter-spacing: -0.125px; }
.m11 { letter-spacing: -0.154px; }
.toolbar { display: flex; align-items: center; }
.standard { height: 38px; }
.formatting { height: 40px; padding-left: 4px; }
.group { display: flex; align-items: center; height: 33px; padding: 0 3.5px; border-left: 1px solid #d9d7d5; }
.standard .group:first-child { border-left: 0; padding-left: 4px; }
.group.last { padding: 0; }
.btn { width: 33px; height: 35px; display: flex; align-items: center; justify-content: center; flex: none; border-radius: 4px; }
.btn svg, .dd svg, .side svg { width: 24px; height: 24px; overflow: visible; flex: none; }
.on { background: #d6d1cd; border: 1px solid #cdc7c2; }
.dd { width: 44px; display: flex; padding-left: 2.5px; flex: none; }
.dd svg.caret { width: 15px; margin-left: 3px; fill: #000; }
.dd.off svg.caret { fill: #b0b0b0; }
.combo { height: 34px; border: 1px solid #cdc7c2; border-radius: 5px; background: #fff; display: flex; align-items: center; justify-content: space-between; padding: 0 0 1px 8px; color: #000; overflow: hidden; flex: none; }
.combo b { width: 35px; height: 34px; border-left: 1px solid #cdc7c2; background: linear-gradient(#f8f7f6, #edebe9); display: flex; align-items: center; justify-content: center; }
.style { width: 202px; margin-right: 1px; }
.font { width: 221px; margin-left: 3px; }
.w-font { letter-spacing: 0.259px; }
.size { width: 98px; margin: 0 4px 0 8px; }
.w-size { letter-spacing: -0.231px; }
.vline { width: 1px; height: 33px; background: #d9d7d5; margin-left: 3px; }
.more { margin-left: auto; margin-right: 2px; }
.work { flex: 1; min-height: 0; display: flex; }
.editor { width: 1293px; display: flex; flex-direction: column; overflow: hidden; }
.rulerbar { height: 42px; flex: none; display: flex; padding-left: 8px; }
.tabsel { margin-top: 9px; }
.ruler { margin-left: 222px; }
.ruler-nums { font: 10.5px "Noto Sans", sans-serif; text-anchor: middle; fill: #a2a2a2; }
.page { width: 819px; margin-left: 236px; height: 600px; flex: none; background: #fff; border: 1px solid #9a9a9a; box-shadow: 0 0 4px rgba(0,0,0,.2); padding: 84px 83px 0 84px; }
.marks { height: 14px; display: flex; justify-content: space-between; }
.mark-l, .mark-r { width: 14px; border: solid #c0c0c0; border-width: 0 1px 1px 0; }
.mark-r { border-width: 0 0 1px 1px; }
h1, h2, h3, p { margin: 0; }
h1, h2, h3, .toc { font-family: Lato, Carlito, sans-serif; }
h1 { margin-top: 31px; padding-left: 1px; height: 30px; font-size: 22px; line-height: 30px; letter-spacing: 0.045px; color: #345a8a; display: flex; justify-content: center; }
.cursor { width: 1px; background: #000; height: 29px; }
h2 { margin-top: 16px; padding-left: 2px; font-size: 18.3px; line-height: 24px; letter-spacing: -0.042px; text-align: center; color: #345a8a; }
.author { margin-top: 15px; padding-left: 1px; height: 20px; text-align: center; line-height: 20px; }
.author, .body { font-family: "DejaVu Serif", serif; font-size: 16px; color: #000; word-spacing: -1.6px; }
.latin { font-family: "DejaVu Serif Condensed", "DejaVu Serif", serif; letter-spacing: -0.663px; }
.wavy { text-decoration: underline wavy #f22 1px; text-underline-offset: 0; text-decoration-skip-ink: none; }
.toc { margin: 0 13px; border: 1px solid #c0c0c0; border-bottom: 0; padding-top: 14px; color: #365f91; font-size: 19px; letter-spacing: 0.2px; }
.toc-title { background: #c0c0c0; height: 27px; line-height: 27px; border-top: 1px solid #ccc; border-bottom: 1px solid #d8d8d8; margin-left: -1px; padding-left: 1px; }
.toc-line { background: #c0c0c0; height: 20px; border-top: 1px solid #d8d8d8; margin-left: -1px; }
h3 { margin: 33px 0 0 14px; font-size: 19px; line-height: 24px; letter-spacing: 0.22px; color: #4f81bd; }
.body { margin: 13px 0 0 14px; line-height: 18px; }
.scrollbar { width: 14px; background: #cecece; padding: 5px 3px; }
.thumb { width: 8px; height: 34px; border-radius: 4px; background: #7e8182; }
.splitter { width: 7px; border-left: 1px solid #b8b8b8; display: flex; padding-top: 196px; }
.handle { width: 7px; height: 73px; flex: none; margin-left: -1px; background: #8f9394; display: flex; align-items: center; justify-content: center; }
.sidebar { flex: 1; display: flex; flex-direction: column; align-items: center; padding: 3px 4px 0 0; }
.side { width: 36px; height: 34px; margin-bottom: 8px; display: flex; align-items: center; justify-content: center; border-radius: 5px; flex: none; }
.side.menu { margin-bottom: 10px; }
.status { height: 23px; flex: none; border-top: 1px solid #b6b3b0; display: flex; align-items: center; font-size: 12px; }
.st { height: 16px; border-right: 1px solid #d9d7d5; display: flex; align-items: center; flex: none; white-space: nowrap; }
.s1 { width: 31px; padding-left: 13px; }
.s2 { width: 207px; padding-left: 8px; letter-spacing: -0.396px; }
.s3 { width: 271px; padding-left: 8px; letter-spacing: -0.251px; }
.s4 { width: 167px; padding-left: 8px; letter-spacing: -0.408px; }
.s5 { width: 165px; justify-content: center; letter-spacing: -0.143px; padding-left: 3px; }
.s6 { width: 67px; }
.s7 { width: 30px; padding-left: 8px; }
.s8 { width: 29px; }
.s9 { width: 129px; }
.s10 { width: 76px; padding-left: 11px; }
.s11 { width: 143px; padding-left: 7px; }
.s12 { border: 0; padding-left: 6px; }
```
